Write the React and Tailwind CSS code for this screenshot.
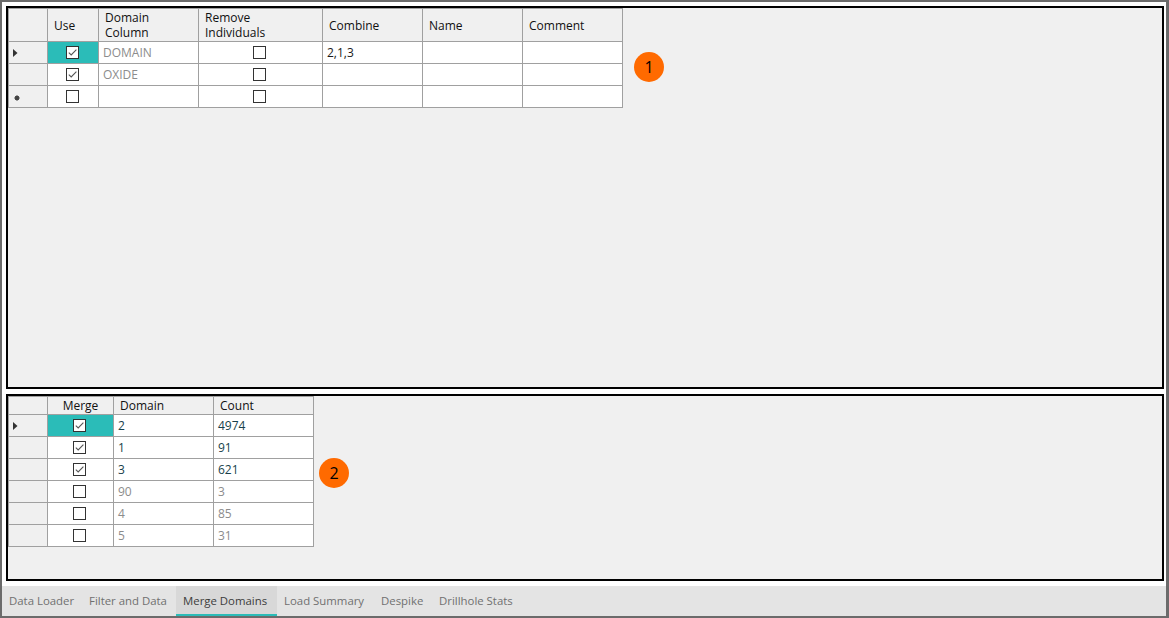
import React from "react";

const LINE = "border-[#a0a0a0]";

function Check({ on }) {
  return (
    <span className="inline-flex h-[13px] w-[13px] items-center justify-center border border-[#333333] bg-white">
      {on && (
        <svg width="11" height="11" viewBox="0 0 11 11">
          <path d="M1.8 5.6 L4.2 8 L9.4 2.6" fill="none" stroke="#555555" strokeWidth="1.1" />
        </svg>
      )}
    </span>
  );
}

function Arrow() {
  return (
    <svg width="5" height="8" viewBox="0 0 5 8" className="ml-[4px]">
      <path d="M0 0 L4.5 4 L0 8 Z" fill="#333333" />
    </svg>
  );
}

function Star() {
  return (
    <svg width="6" height="6" viewBox="0 0 6 6" className="ml-[5px] mt-[2px]">
      <circle cx="3" cy="3" r="2.2" fill="#444444" />
      <path d="M3 0 V6 M0 3 H6 M1 1 L5 5 M5 1 L1 5" stroke="#444444" strokeWidth="0.8" />
    </svg>
  );
}

function Badge({ n }) {
  return (
    <div className="flex h-[30px] w-[30px] items-center justify-center rounded-full bg-[#ff6a00] text-[16px] leading-none text-black">
      {n}
    </div>
  );
}

function HeadCell({ w, children, center, h }) {
  return (
    <div
      className={`flex shrink-0 flex-col justify-center border-b border-r ${LINE} bg-[#f0f0f0] px-[6px] text-[12px] leading-[15px] text-[#111111] ${center ? "items-center" : ""}`}
      style={{ width: w, height: h }}
    >
      {children}
    </div>
  );
}

function Cell({ w, children, center, selected, tone }) {
  return (
    <div
      className={`flex h-[22px] shrink-0 items-center border-b border-r ${LINE} text-[12px] ${center ? "justify-center pr-[2px]" : "pl-[4px]"} ${selected ? "bg-[#2bbcb8]" : "bg-white"} ${tone || "text-[#1a1a1a]"}`}
      style={{ width: w }}
    >
      {children}
    </div>
  );
}

function RowHead({ mark }) {
  return (
    <div className={`flex h-[22px] w-[39px] shrink-0 items-center border-b border-r ${LINE} bg-[#f0f0f0]`}>
      {mark === "arrow" && <Arrow />}
      {mark === "new" && <Star />}
    </div>
  );
}

const domainRows = [
  { use: true, col: "DOMAIN", remove: false, combine: "2,1,3", mark: "arrow", sel: true },
  { use: true, col: "OXIDE", remove: false, combine: "" },
  { use: false, col: "", remove: false, combine: "", mark: "new" },
];

const mergeRows = [
  { on: true, d: "2", c: "4974", sel: true },
  { on: true, d: "1", c: "91" },
  { on: true, d: "3", c: "621" },
  { on: false, d: "90", c: "3" },
  { on: false, d: "4", c: "85" },
  { on: false, d: "5", c: "31" },
];

function DomainGrid() {
  const hh = 33;
  return (
    <div className={`flex flex-col border-l border-t ${LINE}`}>
      <div className="flex">
        <HeadCell w={39} h={hh} />
        <HeadCell w={51} h={hh}>Use</HeadCell>
        <HeadCell w={100} h={hh}>
          <span>Domain</span>
          <span>Column</span>
        </HeadCell>
        <HeadCell w={124} h={hh}>
          <span>Remove</span>
          <span>Individuals</span>
        </HeadCell>
        <HeadCell w={100} h={hh}>Combine</HeadCell>
        <HeadCell w={100} h={hh}>Name</HeadCell>
        <HeadCell w={100} h={hh}>Comment</HeadCell>
      </div>
      {domainRows.map((r, i) => (
        <div key={i} className="flex">
          <RowHead mark={r.mark} />
          <Cell w={51} center selected={r.sel}>
            <Check on={r.use} />
          </Cell>
          <Cell w={100} tone="text-[#8c8c8c]">{r.col}</Cell>
          <Cell w={124} center>
            <Check on={r.remove} />
          </Cell>
          <Cell w={100}>{r.combine}</Cell>
          <Cell w={100} />
          <Cell w={100} />
        </div>
      ))}
    </div>
  );
}

function MergeGrid() {
  const hh = 18;
  return (
    <div className={`flex flex-col border-l border-t ${LINE}`}>
      <div className="flex">
        <HeadCell w={39} h={hh} />
        <HeadCell w={66} h={hh} center>Merge</HeadCell>
        <HeadCell w={100} h={hh}>Domain</HeadCell>
        <HeadCell w={100} h={hh}>Count</HeadCell>
      </div>
      {mergeRows.map((r, i) => {
        const tone = r.on ? "text-[#173f4b]" : "text-[#8c8c8c]";
        return (
          <div key={i} className="flex">
            <RowHead mark={r.sel ? "arrow" : null} />
            <Cell w={66} center selected={r.sel}>
              <Check on={r.on} />
            </Cell>
            <Cell w={100} tone={tone}>{r.d}</Cell>
            <Cell w={100} tone={tone}>{r.c}</Cell>
          </div>
        );
      })}
    </div>
  );
}

const tabs = [
  { label: "Data Loader", w: 80 },
  { label: "Filter and Data", w: 94 },
  { label: "Merge Domains", w: 101, active: true },
  { label: "Load Summary", w: 97 },
  { label: "Despike", w: 58 },
  { label: "Drillhole Stats", w: 90 },
];

export default function App() {
  return (
    <div className="h-[618px] w-[1169px] font-['Open_Sans',sans-serif]">
      <div className="flex h-full w-full flex-col border-b-2 border-l-2 border-r-[3px] border-t-2 border-[#6b6b6b] bg-white">
        <div className="ml-[4px] mr-[2px] mt-[4px] flex h-[383px] shrink-0 border-2 border-black bg-[#f0f0f0]">
          <div className="flex items-start">
            <DomainGrid />
            <div className="ml-[11px] mt-[44px]">
              <Badge n="1" />
            </div>
          </div>
        </div>
        <div className="ml-[4px] mr-[2px] mt-[5px] flex h-[187px] shrink-0 border-2 border-black bg-[#f0f0f0]">
          <div className="flex items-start">
            <MergeGrid />
            <div className="ml-[5px] mt-[62px]">
              <Badge n="2" />
            </div>
          </div>
        </div>
        <div className="mt-[5px] flex h-[30px] shrink-0 bg-[#e4e4e4]">
          {tabs.map((t) => (
            <div
              key={t.label}
              className={`flex h-full shrink-0 items-center pl-[7px] text-[11.4px] ${t.active ? "border-b-2 border-[#2bbcb8] bg-[#d8d8d8] pt-[2px] text-[#3c3c3c]" : "text-[#707070]"}`}
              style={{ width: t.w }}
            >
              {t.label}
            </div>
          ))}
        </div>
      </div>
    </div>
  );
}
